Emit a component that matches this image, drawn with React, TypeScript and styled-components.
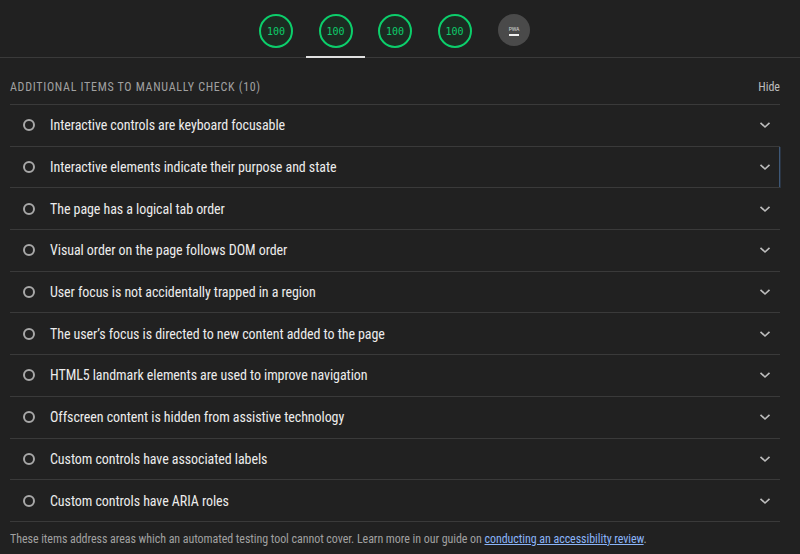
import React from 'react';
import styled, { createGlobalStyle } from 'styled-components';

const GlobalStyle = createGlobalStyle`
  html, body {
    margin: 0;
    padding: 0;
    background: #212121;
  }
  body {
    font-family: Roboto, "Noto Sans", "Liberation Sans", sans-serif;
    font-stretch: 87.5%;
    color: #e3e3e3;
  }
`;

const Page = styled.div`
  width: 800px;
  height: 554px;
  overflow: hidden;
  background: #212121;
`;

const GaugeBar = styled.div`
  display: flex;
  justify-content: center;
  height: 57px;
  padding-right: 10px;
  border-bottom: 1px solid #3a3a3a;
`;

const GaugeSlot = styled.div<{ $active?: boolean }>`
  position: relative;
  width: 59.5px;
  display: flex;
  justify-content: center;
  padding-top: 14px;

  &::after {
    content: '';
    display: ${({ $active }) => ($active ? 'block' : 'none')};
    position: absolute;
    left: 0;
    right: 0;
    bottom: -1px;
    height: 2px;
    background: #e0e0e0;
  }
`;

const Gauge = styled.div`
  width: 30px;
  height: 30px;
  border-radius: 50%;
  border: 2px solid #0cce6b;
  background: #1c2b22;
  display: flex;
  align-items: center;
  justify-content: center;
  color: #0cce6b;
  font-family: "DejaVu Sans Mono", "Liberation Mono", monospace;
  font-size: 10px;
`;

const PwaBadge = styled.div`
  width: 32px;
  height: 32px;
  border-radius: 50%;
  background: #4a4a4a;
  display: flex;
  flex-direction: column;
  align-items: center;
  justify-content: center;
  gap: 2px;
  color: #d0d0d0;
  font-size: 6px;
  letter-spacing: -0.2px;
`;

const PwaDash = styled.span`
  width: 10px;
  height: 2px;
  background: #f0f0f0;
`;

const Section = styled.section`
  padding: 0 20px 0 10px;
`;

const Header = styled.div`
  display: flex;
  align-items: center;
  justify-content: space-between;
  height: 47px;
  padding-top: 12px;
  box-sizing: border-box;
  border-bottom: 1px solid #3a3a3a;
`;

const Title = styled.h2`
  margin: 0;
  font-size: 12px;
  font-weight: 400;
  letter-spacing: 0.7px;
  text-transform: uppercase;
  color: #a0a0a0;
`;

const HideButton = styled.button`
  border: 0;
  background: none;
  padding: 0;
  font: inherit;
  font-size: 12px;
  color: #bdbdbd;
  cursor: pointer;
`;

const List = styled.ul`
  list-style: none;
  margin: 0;
  padding: 0;
`;

const Row = styled.li<{ $focused?: boolean }>`
  display: flex;
  align-items: center;
  height: 41.7px;
  box-sizing: border-box;
  border-bottom: 1px solid #3a3a3a;
  padding: 0 9px 0 13px;
  box-shadow: ${({ $focused }) =>
    $focused ? 'inset -1px 0 0 #3e5877, 1px 0 0 #2a3442' : 'none'};
`;

const Ring = styled.span`
  width: 8px;
  height: 8px;
  border-radius: 50%;
  border: 2px solid #a8a8a8;
  flex: none;
`;

const Label = styled.span`
  flex: 1;
  margin-left: 15px;
  font-size: 14px;
  letter-spacing: -0.07px;
  color: #ececec;
`;

const Chevron = () => (
  <svg width="12" height="8" viewBox="0 0 12 8" aria-hidden="true">
    <path d="M1.5 1.8 6 6 10.5 1.8" fill="none" stroke="#bdbdbd" strokeWidth="1.6" />
  </svg>
);

const Footer = styled.p`
  margin: 0;
  padding: 10px 0 0;
  font-size: 12px;
  letter-spacing: -0.06px;
  color: #a0a0a0;

  a {
    color: #8ab4f8;
  }
`;

const items = [
  'Interactive controls are keyboard focusable',
  'Interactive elements indicate their purpose and state',
  'The page has a logical tab order',
  'Visual order on the page follows DOM order',
  'User focus is not accidentally trapped in a region',
  'The user\u2019s focus is directed to new content added to the page',
  'HTML5 landmark elements are used to improve navigation',
  'Offscreen content is hidden from assistive technology',
  'Custom controls have associated labels',
  'Custom controls have ARIA roles',
];

const App = () => {
  return (
    <Page>
      <GlobalStyle />
      <GaugeBar>
        {[0, 1, 2, 3].map((i) => (
          <GaugeSlot key={i} $active={i === 1}>
            <Gauge>100</Gauge>
          </GaugeSlot>
        ))}
        <GaugeSlot>
          <PwaBadge>
            PWA
            <PwaDash />
          </PwaBadge>
        </GaugeSlot>
      </GaugeBar>
      <Section>
        <Header>
          <Title>Additional items to manually check (10)</Title>
          <HideButton>Hide</HideButton>
        </Header>
        <List>
          {items.map((text, i) => (
            <Row key={text} $focused={i === 1}>
              <Ring />
              <Label>{text}</Label>
              <Chevron />
            </Row>
          ))}
        </List>
        <Footer>
          These items address areas which an automated testing tool cannot cover. Learn more in our
          guide on <a href="#review">conducting an accessibility review</a>.
        </Footer>
      </Section>
    </Page>
  );
};

export default App;
